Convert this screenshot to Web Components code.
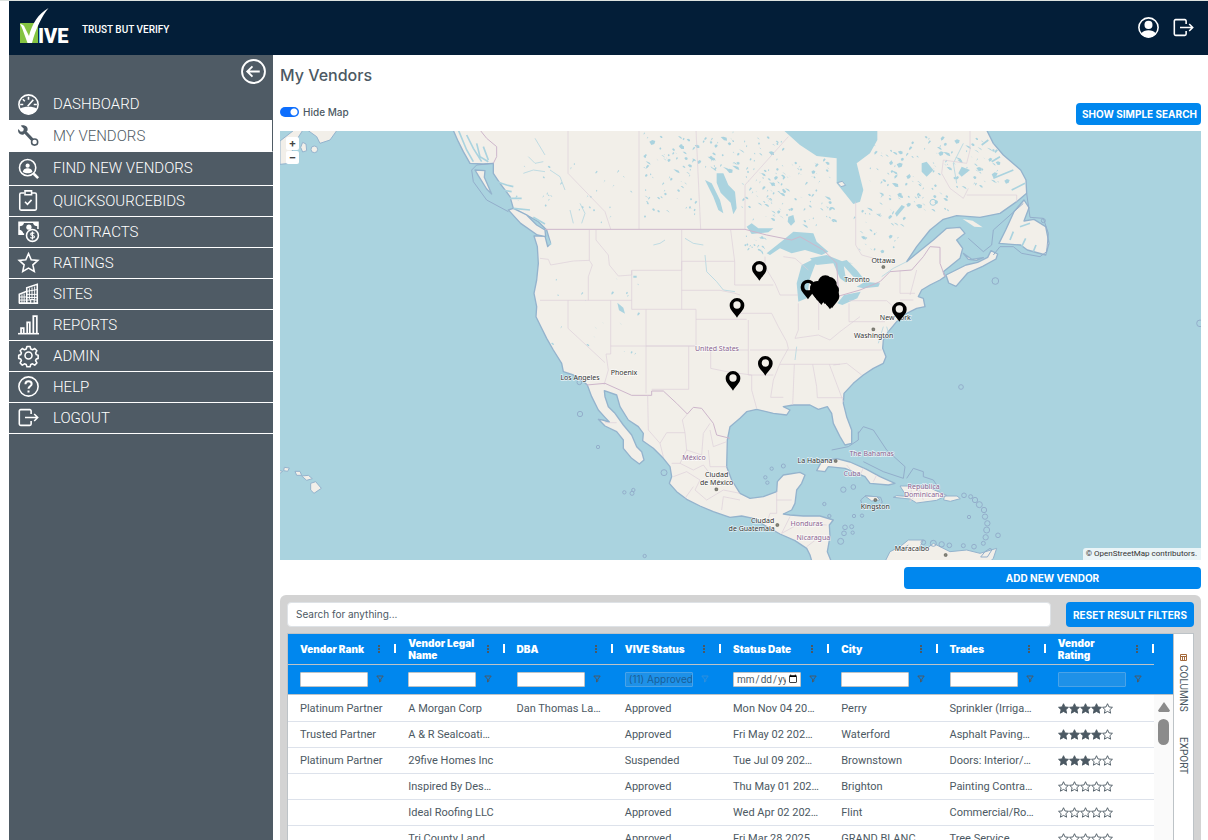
<!DOCTYPE html>
<html lang="en">
<head>
<meta charset="utf-8">
<title>VIVE - My Vendors</title>
<style>
body {
    margin: 0;
    font-family: Inter, Roboto, "Liberation Sans", sans-serif;
    font-size: 11px;
    color: #4c5963;
    background-color: #ffffff;
}
</style>
</head>
<body>
<vive-app></vive-app>

<script>
const define = (name, html, setup) => {
    const template = document.createElement('template');
    template.innerHTML = html;
    customElements.define(name, class extends HTMLElement {
        constructor() {
            super();
            this.attachShadow({ mode: 'open' }).append(template.content.cloneNode(true));
        }

        connectedCallback() {
            if (setup) setup(this, this.shadowRoot);
        }
    });
};

// 24x24 line icons
const icons = {
    user: '<circle cx="12" cy="12" r="11"/><g fill="currentColor" stroke="none"><circle cx="12" cy="9" r="4.6"/><path d="M3.5 19c2-3.400 5-4 8.500-4s6.500.6 8.500 4c-2 2.800-5 4.200-8.500 4.200S5.500 21.800 3.500 19z"/></g>',
    exit: '<path d="M15 8V4.500a1.500 1.500 0 0 0-1.500-1.500H3A1.500 1.500 0 0 0 1.500 4.500v15A1.500 1.500 0 0 0 3 21h10.500a1.500 1.500 0 0 0 1.500-1.500V16M8 12h14.500M18.500 8l4 4-4 4"/>',
    back: '<circle cx="12" cy="12" r="11"/><path d="M18 12H6.500M11 7l-5 5 5 5"/>',
    dashboard: '<circle cx="12" cy="12" r="11"/><path d="M2 17c3-2 6-2.500 10-2.500s7 .5 10 2.500c-2 4-5.500 6-10 6s-8-2-10-6z" fill="currentColor" stroke="none"/><path d="M12 3v3.500M5.500 6l2.300 2.300M2.500 12H6M18 12h3.500M11 14l6.500-7.500"/>',
    wrench: '<path d="M3.200.8l3.500 3.500-.8 2.700-2.700.8L.2 4.500C-.3 7 .4 9 2.200 10.300c1.300.9 2.800 1 4.200.6l4.500-4.500c.4-1.600.1-3.200-1-4.400C8.300.3 5.500-.2 3.200.8z" fill="currentColor" stroke="none"/><path d="M7.500 7.500L16.500 17" stroke-width="3.500"/><circle cx="19" cy="19.500" r="3.500"/>',
    find: '<circle cx="11" cy="11" r="9.300"/><path d="M18 18l5 5" stroke-width="3"/><circle cx="11" cy="8.800" r="2.400" fill="currentColor" stroke="none"/><path d="M5.500 16c.5-3.500 3-4.300 5.500-4.300s5 .8 5.500 4.300c-3 2-8 2-11 0z" fill="currentColor" stroke="none"/>',
    clipboard: '<path d="M7 3.500H3.500A1.500 1.500 0 0 0 2 5v16.500A1.500 1.500 0 0 0 3.500 23h16a1.500 1.500 0 0 0 1.500-1.500V5a1.500 1.500 0 0 0-1.500-1.500H16"/><path d="M8 1h7.500v4.500H8zM8 13.500l2.800 2.800 4.700-5"/>',
    contracts: '<path d="M7 15H1.200V1.500h21.600V9"/><path d="M1 1h6c0 3-2 5-6 5zM23 1h-6c0 3 2 5 6 5zM1 15v-5c3 0 5 2 5 5z" fill="currentColor" stroke="none"/><circle cx="12.500" cy="7" r="3" fill="currentColor" stroke="none"/><circle cx="16.500" cy="16.500" r="6.800" fill="#4f5b65"/><path d="M18.800 14.200c-1-1-4.300-1-4.300.8 0 2 4.300 1 4.300 3 0 1.800-3.500 1.800-4.600.6M16.500 12v9" stroke-width="1.300"/>',
    star: '<path d="M12 1.800l3.100 7 7.600.8-5.700 5.100 1.600 7.500-6.600-3.800-6.600 3.800L7 14.700 1.300 9.600l7.600-.8z"/>',
    sites: '<path d="M1.500 23V13L10 9.500M10 23V5.500L22 1.500V23zM1 23h22"/><path d="M13 6v13M16 5v13M19 4v15M10 9.500l12-2M10 13h12M10 16.500h12M10 19.500h12M4.500 13v10M7 12v11M1.500 16H10M1.500 19.500H10" stroke-width="1.100"/><rect x="14.500" y="19" width="4" height="4" fill="#4f5b65" stroke-width="1.300"/>',
    reports: '<path d="M0 22.500h24"/><path d="M3.500 22v-6h3v6M10.500 22V9.500h3V22M17.500 22V2.500h4V22" stroke-width="2"/>',
    gear: '<circle cx="12" cy="12" r="4"/><path d="M10.200 1.800h3.600l.8 2.800 2 .9 2.500-1.500 2.500 2.500-1.500 2.600.8 1.900 2.100.7v3.600l-2.100.7-.8 1.900 1.500 2.600-2.500 2.500-2.500-1.500-2 .8-.8 2.600h-3.600l-.8-2.600-2-.8-2.500 1.500-2.500-2.500 1.500-2.600-.8-1.900-2.300-.7v-3.600l2.300-.7.8-1.900-1.500-2.600 2.500-2.500 2.500 1.500 2-.9z" stroke-linejoin="round"/>',
    help: '<circle cx="12" cy="12" r="11"/><path d="M8.500 9.500c0-2.300 1.500-3.500 3.600-3.500s3.500 1.300 3.500 3.100c0 2.500-3.600 2.600-3.600 5.400M12 16.500v2.300" stroke-width="2.300"/>'
};

define('vive-icon', `
<style>
:host { display: block; width: 21px; height: 21px; flex: none; }
svg { display: block; width: 100%; height: 100%; overflow: visible; }
</style>
<svg viewBox="0 0 24 24" fill="none" stroke="currentColor" stroke-width="1.8"></svg>
`, (el, root) => {
    root.querySelector('svg').innerHTML = icons[el.getAttribute('name')];
});

define('vive-button', `
<style>
:host { display: block; }
button {
    display: block;
    width: 100%;
    height: 100%;
    padding: 0 6px;
    border: none;
    border-radius: 4px;
    background-color: #0087ee;
    color: #ffffff;
    font: 700 10px Inter, sans-serif;
    white-space: nowrap;
}
</style>
<button type="button"><slot></slot></button>
`);

define('vive-header', `
<style>
:host {
    display: flex;
    align-items: center;
    height: 54px;
    box-sizing: border-box;
    padding: 0 14px 2px 9px;
    background-color: #031e38;
    color: #ffffff;
}
.logo { width: 58px; height: 44px; margin-right: 6px; overflow: visible; }
.logo text { font: 900 20px Roboto, sans-serif; }
.tagline { flex: 1; padding-top: 4px; font: 500 10px Roboto, sans-serif; }
a { color: inherit; margin-left: 14px; }
</style>
<svg class="logo" viewBox="0 0 58 44" role="img" aria-label="VIVE">
    <path d="M2 18h18v20H2z" fill="#84c341"/>
    <path d="M2 19c2 0 4 1 5 4l4 8C14 19 20 9 30.500 3 24 11 18 23 14 38h-4.500L5.500 27C4.500 24 3.500 21 2 19z" fill="#ffffff"/>
    <text x="20" y="38" fill="#ffffff">IVE</text>
</svg>
<span class="tagline">TRUST BUT VERIFY</span>
<a href="#profile" aria-label="Profile"><vive-icon name="user"></vive-icon></a>
<a href="#logout" aria-label="Log out"><vive-icon name="exit"></vive-icon></a>
`);

define('nav-item', `
<style>
:host { display: block; height: 31px; border-bottom: 1px solid #ffffff; box-sizing: border-box; }
:host([plain]) { border-color: transparent; }
:host([tall]) { height: 34px; }
:host([active]) { height: 32px; background-color: #ffffff; border-right: 1px solid #4f5b65; }
:host([active]) a { color: #4f5b65; }
a {
    display: flex;
    align-items: center;
    gap: 14px;
    height: 100%;
    box-sizing: border-box;
    padding: 0 0 1px 9px;
    color: #ffffff;
    font: 300 15px Roboto, sans-serif;
    text-decoration: none;
}
:host([plain]) a, :host([active]) a { padding-bottom: 0; }
</style>
<a href="#"><slot></slot></a>
`, (el, root) => {
    root.querySelector('slot').insertAdjacentHTML('beforebegin', `<vive-icon name="${el.getAttribute('icon')}"></vive-icon>`);
});

define('vive-sidebar', `
<style>
:host { display: block; width: 264px; flex: none; background-color: #4f5b65; color: #ffffff; }
button {
    display: block;
    margin: 4px 7px 5px auto;
    padding: 0;
    border: none;
    background: none;
    color: inherit;
}
button vive-icon { width: 25px; height: 25px; }
</style>
<button type="button" aria-label="Collapse menu"><vive-icon name="back"></vive-icon></button>
<nav>
    <nav-item icon="dashboard" plain>DASHBOARD</nav-item>
    <nav-item icon="wrench" active>MY VENDORS</nav-item>
    <nav-item icon="find" tall>FIND NEW VENDORS</nav-item>
    <nav-item icon="clipboard">QUICKSOURCEBIDS</nav-item>
    <nav-item icon="contracts">CONTRACTS</nav-item>
    <nav-item icon="star">RATINGS</nav-item>
    <nav-item icon="sites">SITES</nav-item>
    <nav-item icon="reports">REPORTS</nav-item>
    <nav-item icon="gear">ADMIN</nav-item>
    <nav-item icon="help">HELP</nav-item>
    <nav-item icon="exit">LOGOUT</nav-item>
</nav>
`);

define('vendor-map', `
<style>
:host { display: block; position: relative; height: 429px; overflow: hidden; background-color: #aad3df; }
svg { display: block; width: 100%; height: 100%; }
.land { fill: #f2efe9; stroke: #94b3cd; stroke-width: 4; stroke-linejoin: round; }
.isle { fill: #f2efe9; stroke: #94b3cd; stroke-width: 3; }
.water { fill: #aad3df; }
.sea-line { fill: none; stroke: #93aecb; stroke-width: 3; }
.states { fill: none; stroke: #ddcfd9; stroke-width: 2; }
.border { fill: none; stroke: #cdb6cb; stroke-width: 3; }
.inlets { fill: none; stroke: #aad3df; stroke-width: 5; }
text { font: 21px "Noto Sans", sans-serif; fill: #333333; text-anchor: middle; paint-order: stroke; stroke: #ffffff; stroke-opacity: 0.7; stroke-width: 4; }
.country text { fill: #8a6490; }
.zoom { position: absolute; left: 6px; top: 6px; display: flex; flex-direction: column; gap: 1px; }
.zoom button {
    width: 13px;
    height: 13px;
    padding: 0;
    border: none;
    border-radius: 2px;
    background-color: #ffffff;
    color: #444444;
    font: 700 11px/13px Inter, sans-serif;
}
.credit {
    position: absolute;
    right: 0;
    bottom: 0;
    padding: 0 4px 0 3px;
    background-color: rgba(255, 255, 255, 0.75);
    border-radius: 3px 0 0 0;
    font: 8px/12px Roboto, sans-serif;
    color: #333333;
}
.credit a { color: inherit; text-decoration: none; }
</style>
<svg viewBox="0 3 2763 1287" preserveAspectRatio="xMidYMid slice" role="img" aria-label="Map of vendors">
    <path class="land" d="M515-10L535 35 550 65 570 100 610 102 640 100 640 130 660 160 690 200 700 235 740 255 775 275 800 300 812 340 803 350 795 318 762 318 772 350 775 400 770 450 762 490 770 530 768 560 785 595 800 625 820 660 845 700 850 725 880 735 905 750 922 765 935 800 955 840 975 862 988 876 968 870 955 868 975 888 1010 905 1030 930 1030 955 1055 985 1078 1002 1092 990 1085 965 1070 950 1055 915 1030 885 1005 850 985 830 975 800 973 782 1010 795 1020 830 1045 870 1075 890 1090 910 1088 932 1120 955 1150 985 1170 1010 1175 1040 1168 1060 1190 1085 1220 1108 1260 1128 1300 1145 1350 1162 1385 1158 1420 1165 1460 1190 1500 1212 1545 1232 1580 1255 1590 1275 1600 1310 1660 1310 1642 1265 1650 1220 1648 1185 1660 1170 1620 1158 1570 1158 1530 1155 1510 1152 1535 1140 1545 1120 1550 1080 1565 1060 1575 1035 1560 1027 1510 1035 1492 1055 1490 1085 1450 1100 1410 1105 1380 1090 1355 1050 1340 1010 1342 930 1350 890 1380 865 1400 845 1430 838 1480 850 1520 855 1530 840 1510 830 1540 825 1590 825 1615 838 1642 830 1655 850 1660 880 1680 920 1695 945 1715 940 1715 900 1700 860 1690 820 1692 790 1720 760 1750 735 1780 715 1810 700 1818 680 1808 655 1810 630 1825 605 1850 575 1870 555 1910 535 1935 530 1930 505 1915 500 1925 480 1950 465 1980 450 1995 440 1990 425 2015 405 2040 385 2048 355 2030 330 2055 310 2040 292 2000 295 1960 330 1920 362 1880 395 1910 350 1950 300 1990 268 2030 257 2100 262 2160 250 2210 215 2240 190 2238 150 2222 120 2170 75 2140 40 2115-10z"/>
    <path class="water" d="M1510 0l50 45 50 33 60 7v75l50 62 20-7 10-35-20-80 40-30 22-40v-35z"/>
    <path class="isle" d="M1672 158l15-4 10 12-14 4z" stroke="none"/>
    <path class="isle" d="M0 103l0-70 45-35h25L40 45 30 100zM75-5h100L150 30 120 40 110 20zM93 58a10 10 0 1 0 20 0a10 10 0 1 0-20 0M62 52l6-15 10 5 2 20-12 4z"/>
    <path class="land" d="M585 120l30 2-2 20 22 50-15-15-25-40zM685 240l15-5 40 20 30 30 25 15 2 20-25-5-50-35z"/>
    <path class="sea-line" d="M640 100L590 105 575 120 580 155 620 210 685 245"/>
    <path class="land" d="M2232 210l-30 35-25 55-20 40 65 5 20 15 55 15 10-35-10-50-35-22-30 5 15-40z"/>
    <path class="land" d="M1998 435l30-15 30-15 35-8 30-15 10-20 20 10-5 15-40 22-45 20-35 40-22-10zM2050 370l25 18 35-5-20 8-25-3z"/>
    <path class="isle" style="stroke:none" d="M2048 267l30 5 30 20-25-2z"/>
    <path class="sea-line" d="M2240 190L2250 262 2290 265 2305 310 2300 365 2280 380 2225 370 2200 350 2160 350 2140 375M2230 220l-90 80-5 45-25 20-45-40"/>
    <path class="sea-line" d="M1735 910l15-20 30 10 40 60 55 50-5 35-60-20-60-30M1655 960l50-10 30-20V905M1880 1045l20-30 30 10v15l30 10 20 30M1742 1110l15-13 45 5 5 15-20 12-40-3z"/>
    <!-- Caribbean -->
    <path class="land" d="M1610 1022l15-28 45-8 40 10 50 22 40 22 45 20-20 5-55-5-15-20-60-25-50-5-10 15z"/>
    <path class="isle" d="M1860 1068l40 0 55 8 45 20-30 15-60 8-20-12-50-5 10-5 30 2zM1993 1098l38 0 10 8-30 8-20-4zM1755 1098l35 2 10 10-25 3zM92 1060l15-5 17 20-22 15-10-10zM45 1024l15 0 5 12-15 0zM65 1038l20-2 12 10-17 5zM13 1012l15 2-5 10-12-2zM0 1022l8 2-8 6"/>
    <path class="isle" d="M1815 1295l15-30 30-15 25-20 45 0-10 20 15 10 25-20 50 25 50-5 40 10 50-15-10 30-20 20zM1865 1260l20-15"/>
    <g class="sea-line">
        <circle cx="2052" cy="1096" r="7"/><circle cx="2072" cy="1100" r="6"/><circle cx="2085" cy="1110" r="8"/><circle cx="2098" cy="1124" r="9"/><circle cx="2112" cy="1140" r="8"/><circle cx="2115" cy="1160" r="8"/><circle cx="2122" cy="1180" r="8"/><circle cx="2120" cy="1200" r="9"/><circle cx="2117" cy="1222" r="8"/><circle cx="2110" cy="1240" r="6"/>
        <circle cx="2154" cy="1216" r="7"/><circle cx="2067" cy="1161" r="5"/><circle cx="1690" cy="1079" r="8"/><circle cx="1720" cy="1071" r="7"/><circle cx="1633" cy="1122" r="5"/><circle cx="1648" cy="1158" r="5"/><circle cx="1722" cy="1158" r="5"/><circle cx="1746" cy="1157" r="5"/><circle cx="1695" cy="1192" r="7"/><circle cx="1715" cy="1190" r="6"/><circle cx="1692" cy="1210" r="7"/><circle cx="1718" cy="1208" r="5"/><circle cx="1682" cy="1234" r="9"/>
        <circle cx="1475" cy="1016" r="5"/><circle cx="1510" cy="1008" r="6"/><circle cx="1456" cy="1042" r="5"/><circle cx="1462" cy="1058" r="5"/><circle cx="1033" cy="1087" r="5"/><circle cx="1060" cy="1080" r="5"/><circle cx="1056" cy="1090" r="6"/><circle cx="954" cy="951" r="5"/><circle cx="1094" cy="1278" r="5"/><circle cx="900" cy="852" r="8"/><circle cx="898" cy="757" r="7"/><circle cx="2043" cy="771" r="7"/><circle cx="2146" cy="453" r="10"/><circle cx="2290" cy="272" r="6"/><circle cx="2760" cy="580" r="10"/>
        <circle cx="1152" cy="1028" r="9"/><circle cx="1930" cy="1237" r="7"/><circle cx="1960" cy="1240" r="9"/><circle cx="1985" cy="1243" r="8"/><circle cx="2008" cy="1246" r="7"/><circle cx="2050" cy="1247" r="6"/><circle cx="2082" cy="1250" r="7"/><path d="M2115 1265l15-10 6 4-14 22h-20z"/>
    </g>
    <!-- fjords and rivers -->
    <path class="inlets" d="M535 0l25 60 20 35M560 15l20 40 25 40M590 40l10 40 25 15M610 50l15 40M650 155l30 10 20 5M665 180l30 5M685 205l40 0M700 235l50 5M760 262l35 20M800 320l12 25M2190 330l10-25M2225 350l12-25M2260 365l8-20M2220 290l30-10M2125 30l-20 15M2160 80l-25 15M2200 120l-60 25M2235 160l-40 20"/>
    <path class="inlets" style="stroke-width:3;opacity:.7" d="M765 25l30 50M745 80l20 20 25-5M810 120l30 20 15 40M730 130l30-10 35 5M900 220l15 30-10 30M870 240l10 40M1275 375l5 50 30 30 20 25 35 5M1215 325l25 15 30 5M1120 345l20-5 15-10M1880 395l-40 20-35 25M2050 40l-30 60 10 60M1550 650l-5 40M1810 590l-15 50M1820 590l10 35"/>
    <g class="water" id="lakes">
        <path d="M1310 130l20 0 15 35 20 20 5 50-10 18-8-35-30-30-12-30zM1275 150l20 10 25 50 10 40-15-10-15-40z"/>
        <path d="M1460 370l50-40 30-25 60 5 10 25 35 30-20 10-50-15-40 10-35-15-30 20z"/>
        <path d="M1555 515l-5-55 15-55 30-15 30-5-20 20-15 40-10 60zM1590 385l50-10 50 20 30 5-30 0 10 60-20-15-20-45-50 5zM1680 395l20-5 30 30 20 25-30-5z"/>
        <path d="M1672 520l20-25 50-10-10 20-45 20zM1730 470l25-15 45 5-5 10-45 5z"/>
        <path d="M1012 518l18 15 5 18-18-10zM1525 260l15-5 5 20-12 12-10-12zM1400 290l15-10 20 15 45 0-15 12-50 5zM1925 100l15-5 20 25-20 20-15-15zM2035 130l10-20 25 10-25 20zM1865 225l10 5-25 30-5-10zM1060 437h10v6h-10z"/>
    </g>
    <path class="sea-line" style="stroke:#aad3df" d="M1950 217a9 9 0 1 0 18 0a9 9 0 1 0-18 0"/>
    <!-- state and province lines -->
    <path class="states" d="M864 0V130L975 245 992 297M1077 0V297M1248 0L1262 297M1525 20L1395 165V297M1727 215V345L1745 375 1800 390M780 385L805 388 812 405 880 393 928 391V300M928 391L937 405 925 440V511M948 300V330L985 375 988 405 1015 438 1055 435V421H1205V300M1055 421V538H1248V648H992V511M780 511H1055M864 511V595L975 698M1205 394H1364L1352 300M1205 394V538M1205 481H1320L1365 490 1380 495M1364 394V465M1248 568H1400M1098 538V790M992 648V672H978L985 720 972 765M1098 648H1248V660H1405M1226 648V778H1115M1292 660V715L1340 725 1415 735V780L1430 835M1364 465H1480M1380 550H1475L1495 590 1520 635 1525 655 1500 700 1480 750 1472 802H1510M1455 380V410L1485 460 1500 495H1555M1405 570V735H1480M1410 660H1805M1500 703H1680M1555 520V600L1545 625 1615 615 1650 630 1680 605 1740 560M1616 510V600M1707 520V575H1815M1707 512H1820L1840 530M1543 703L1538 825M1598 703L1610 770 1612 803H1690M1648 703L1690 815M1660 705L1700 700 1745 735M1860 422V490H1905M1860 510H1900M1910 420L1890 495M1510 380L1545 385 1585 420M2060 195H2210V215M2070 0V60L2060 100 1990 90 1985 130 2010 175 2050 205 2065 175"/>
    <path class="border" d="M600 0L620 25 650 50V80L640 100M795 298H1395L1460 315 1535 330 1560 320 1630 360 1670 400 1675 480M1670 500L1740 480 1800 455 1830 425 1895 420 1930 380 1950 350 1980 352V400L1995 440M920 765L975 760 1055 796H1115V783H1150L1190 820 1222 852 1240 832 1265 835 1300 880 1310 915 1350 925"/>
    <path class="states" d="M975 878H1010M1103 796L1105 900 1140 940 1160 908H1215L1207 870 1222 852M1140 940L1150 980M1215 908L1220 960 1200 1000 1175 1000M1220 960L1265 975 1270 910 1290 880M1290 900L1300 950 1340 935M1285 960L1290 1010H1340M1200 1000L1240 1020 1270 1005 1300 1045M1180 1040L1220 1025 1260 1050 1245 1080 1280 1110 1330 1080 1380 1090M1215 1105L1240 1070M1325 1140L1330 1100 1380 1110M1490 1085V1150H1470L1460 1180M1490 1110H1535M1530 1160L1505 1210 1560 1180 1640 1185M1580 1250L1620 1220 1650 1225M1895 1070L1890 1115 1920 1080 1930 1110M1700 1005L1720 1030M1750 1015L1740 1035M1790 1035L1780 1055"/>
    <g>
        <text x="900" y="750">Los Angeles</text>
        <text x="1032" y="735">Phoenix</text>
        <text x="1810" y="399">Ottawa</text>
        <text x="1731" y="456">Toronto</text>
        <text x="1846" y="570">New York</text>
        <text x="1781" y="625">Washington</text>
        <text x="1310" y="1041">Ciudad</text>
        <text x="1310" y="1066">de México</text>
        <text x="1605" y="1000">La Habana</text>
        <text x="1786" y="1137">Kingston</text>
        <text x="1448" y="1179">Ciudad</text>
        <text x="1415" y="1204">de Guatemala</text>
        <text x="1896" y="1263">Maracaibo</text>
    </g>
    <g class="country">
        <text x="1311" y="662">United States</text>
        <text x="1242" y="991">México</text>
        <text x="1775" y="978">The Bahamas</text>
        <text x="1716" y="1037">Cuba</text>
        <text x="1931" y="1077">República</text>
        <text x="1931" y="1102">Dominicana</text>
        <text x="1580" y="1188">Honduras</text>
        <text x="1600" y="1230">Nicaragua</text>
    </g>
    <g id="towns" fill="#8b8b80" stroke="#55554d" stroke-width="2"></g>
    <g id="pins"></g>
</svg>
<div class="zoom">
    <button type="button" aria-label="Zoom in">+</button>
    <button type="button" aria-label="Zoom out">−</button>
</div>
<div class="credit">© <a href="#osm">OpenStreetMap</a> contributors.</div>
`, (el, root) => {
    const pins = [[1438, 452], [1371, 563], [1359, 782], [1456, 737], [1858, 575], [1584, 508]];
    // the Michigan cluster
    const cluster = [[1612, 512], [1620, 520], [1624, 525], [1628, 515], [1636, 495], [1640, 505],
        [1634, 522], [1642, 528], [1650, 538], [1645, 515], [1652, 525], [1656, 535], [1655, 518], [1648, 500]];
    root.querySelector('#pins').innerHTML = pins.map(([x, y]) =>
        `<path d="M${x} ${y}c-8-14-22-22-22-37a22 22 0 0 1 44 0c0 15-14 23-22 37zm0-49a11 11 0 1 0 0 22a11 11 0 1 0 0-22z" fill-rule="evenodd"/>`
    ).join('') + cluster.map(([x, y]) =>
        `<path d="M${x} ${y}c-8-14-22-22-22-37a22 22 0 0 1 44 0c0 15-14 23-22 37z"/>`
    ).join('');
    root.querySelector('#towns').innerHTML = [[1810, 411], [1780, 598], [1786, 1110], [1492, 1185], [1309, 1078], [1997, 1275], [1667, 993]]
        .map(([x, y]) => `<rect x="${x - 4}" y="${y - 4}" width="8" height="8" rx="2"/>`).join('');

    // small lakes scattered over the Canadian shield
    let seed = 7;
    const random = () => (seed = (seed * 16807) % 2147483647) / 2147483647;
    let lakes = '';
    const scatter = (count, x, y, w, h, size) => {
        for (let i = 0; i < count; i++) {
            const cx = Math.round(x + random() * w);
            const cy = Math.round(y + random() * h);
            const r = Math.round(2 + random() * random() * size);
            const turn = Math.round(random() * 8 - 4);
            lakes += `<path d="M${cx} ${cy}l${r} ${turn - 2} ${r} 3 ${turn} ${r} ${-r} ${-turn}z"/>`;
        }
    };
    scatter(70, 1090, 10, 290, 110, 9);
    scatter(35, 1090, 110, 160, 150, 4);
    scatter(70, 1380, 20, 130, 250, 7);
    scatter(60, 1500, 90, 160, 200, 6);
    scatter(90, 1760, 20, 240, 220, 9);
    scatter(50, 2000, 20, 180, 150, 8);
    scatter(30, 1720, 240, 160, 130, 6);
    scatter(20, 800, 440, 280, 240, 3);
    scatter(30, 700, 100, 360, 180, 3);
    scatter(20, 1390, 310, 60, 60, 4);
    root.querySelector('#lakes').insertAdjacentHTML('beforeend', lakes);
});

define('star-rating', `
<style>
:host { display: flex; }
svg { width: 11px; height: 11px; fill: none; stroke: #4c5963; }
svg.full { fill: #4c5963; }
</style>
`, (el, root) => {
    const value = Number(el.getAttribute('value'));
    for (let i = 0; i < 5; i++) {
        root.innerHTML += `<svg class="${i < value ? 'full' : ''}" viewBox="0 0 12 12"><path d="M6 .8l1.600 3.500 3.800.4-2.800 2.600.8 3.800L6 9.200l-3.400 1.900.8-3.800L.6 4.700l3.800-.4z"/></svg>`;
    }
});

const columns = ['Vendor Rank', 'Vendor Legal Name', 'DBA', 'VIVE Status', 'Status Date', 'City', 'Trades', 'Vendor Rating'];
const vendors = [
    ['Platinum Partner', 'A Morgan Corp', 'Dan Thomas La…', 'Approved', 'Mon Nov 04 20…', 'Perry', 'Sprinkler (Irriga…', 4],
    ['Trusted Partner', 'A & R Sealcoati…', '', 'Approved', 'Fri May 02 202…', 'Waterford', 'Asphalt Paving…', 4],
    ['Platinum Partner', '29five Homes Inc', '', 'Suspended', 'Tue Jul 09 202…', 'Brownstown', 'Doors: Interior/…', 3],
    ['', 'Inspired By Des…', '', 'Approved', 'Thu May 01 202…', 'Brighton', 'Painting Contra…', 0],
    ['', 'Ideal Roofing LLC', '', 'Approved', 'Wed Apr 02 202…', 'Flint', 'Commercial/Ro…', 0],
    ['', 'Tri County Land…', '', 'Approved', 'Fri Mar 28 2025…', 'GRAND BLANC', 'Tree Service', 0]
];

define('vendor-table', `
<style>
:host { display: block; min-width: 0; }
table { width: 100%; table-layout: fixed; border-collapse: separate; border-spacing: 0; background-color: #ffffff; }
th, td { box-sizing: border-box; padding: 0 0 0 12px; text-align: left; white-space: nowrap; overflow: hidden; }
thead { background-color: #0087ee; color: #ffffff; }
thead th { height: 31px; padding-bottom: 1px; border-bottom: 1px solid #bdc3c7; font-size: 10px; font-weight: 900; line-height: 12px; white-space: normal; }
thead td { height: 30px; padding-bottom: 1px; border-bottom: 1px solid #bdc3c7; }
thead tr:first-child td.rail { border-bottom-color: #0087ee; }
.rail { width: 19px; padding: 0; }
.head, .filter { display: flex; align-items: center; }
.head span { flex: 1; padding-right: 8px; }
.head .dots { flex: none; width: 2px; height: 8px; margin-right: 14px; background: repeating-linear-gradient(#4c5963 0 2px, transparent 2px 3px); }
.head .grip { flex: none; width: 1px; height: 9px; background-color: #ffffff; border-right: 1px solid #ffffff; }
.filter input {
    width: 68px;
    height: 15px;
    box-sizing: border-box;
    padding: 0 0 0 3px;
    border: 1px solid #bdc3c7;
    border-radius: 1px;
    background-color: #ffffff;
    color: #4c5963;
    font: 10px Inter, sans-serif;
}
.filter input:disabled { background-color: #1e91e8; border-color: #4aa3e8; color: #1a5f98; }
.filter input[type='date'] { padding: 0 0 0 2px; overflow: hidden; font-family: Roboto, sans-serif; }
.filter svg { width: 8px; height: 8px; margin-left: 8px; fill: none; stroke: #4c5963; }
.filter.off svg { stroke: #2e8fdc; }
tbody td { height: 26px; border-bottom: 1px solid #dde2eb; font: 11px Roboto, sans-serif; }
tbody tr:first-child td { height: 27px; }
tbody td.rail { padding: 7px 0 0 4px; border: none; vertical-align: top; background-color: #fafafa; }
.rail svg { display: block; width: 12px; height: 10px; fill: #8b8b8b; }
.thumb { width: 11px; height: 26px; margin-top: 7px; border-radius: 6px; background-color: #8b8b8b; }
</style>
<table>
    <thead></thead>
    <tbody></tbody>
</table>
`, (el, root) => {
    const funnel = '<svg viewBox="0 0 8 8"><path d="M.8 1h6.400L4.800 4.200v2L3.500 7V4.200z"/></svg>';
    const filterInput = name => {
        if (name === 'VIVE Status') return `<input type="text" value="(11) Approved" disabled aria-label="${name} filter">`;
        if (name === 'Vendor Rating') return `<input type="text" disabled aria-label="${name} filter">`;
        return `<input type="${name === 'Status Date' ? 'date' : 'text'}" aria-label="${name} filter">`;
    };
    root.querySelector('thead').innerHTML =
        '<tr>' + columns.map(name => `<th scope="col"><div class="head"><span>${name}</span><i class="dots"></i><i class="grip"></i></div></th>`).join('') + '<td class="rail"></td></tr>' +
        '<tr>' + columns.map(name => `<td><div class="filter ${name === 'VIVE Status' ? 'off' : ''}">${filterInput(name)}${funnel}</div></td>`).join('') + '<td class="rail"></td></tr>';
    root.querySelector('tbody').innerHTML = vendors.map((vendor, i) =>
        '<tr>' + vendor.map((value, col) => `<td>${col === 7 ? `<star-rating value="${value}"></star-rating>` : value.replace('&', '&amp;')}</td>`).join('') +
        (i === 0 ? `<td class="rail" rowspan="${vendors.length}"><svg viewBox="0 0 12 10"><path d="M6 0l6 8.500-1 1.500H1L0 8.500z"/></svg><div class="thumb"></div></td>` : '') + '</tr>'
    ).join('');
});

define('vendor-grid', `
<style>
:host {
    display: block;
    padding: 7px 7px 0;
    border-radius: 6px 6px 0 0;
    background-color: #d3d3d3;
}
.search { display: flex; gap: 15px; margin-bottom: 6px; }
.search input {
    flex: 1;
    height: 25px;
    box-sizing: border-box;
    padding: 0 8px 2px;
    border: 1px solid #dee2e6;
    border-radius: 4px;
    font: 10px Inter, sans-serif;
}
.search input::placeholder { color: #4c5963; }
.search vive-button { width: 128px; height: 25px; }
.grid { display: flex; border: 1px solid #bdc3c7; border-bottom: none; }
vendor-table { flex: 1; }
.tools {
    display: flex;
    flex-direction: column;
    width: 20px;
    box-sizing: border-box;
    padding-top: 20px;
    gap: 25px;
    border-left: 1px solid #bdc3c7;
    background-color: #ffffff;
}
.tools button {
    display: flex;
    align-items: center;
    gap: 4px;
    padding: 0;
    border: none;
    background: none;
    color: #4c5963;
    font: 10px/19px Roboto, sans-serif;
    writing-mode: vertical-rl;
}
.tools svg { width: 7px; height: 7px; fill: none; stroke: #a56a3c; }
</style>
<div class="search">
    <input type="text" placeholder="Search for anything..." aria-label="Search for anything">
    <vive-button>RESET RESULT FILTERS</vive-button>
</div>
<div class="grid">
    <vendor-table></vendor-table>
    <div class="tools">
        <button type="button"><svg viewBox="0 0 7 7"><path d="M.5.500h6v6h-6zM.5 2.500h6M2.500 2.500v4M4.500 2.500v4"/></svg>COLUMNS</button>
        <button type="button">EXPORT</button>
    </div>
</div>
`);

define('map-toggle', `
<style>
:host { display: block; }
label { display: flex; align-items: center; gap: 4px; font-size: 10px; font-weight: 500; }
input {
    appearance: none;
    width: 19px;
    height: 10px;
    margin: 0;
    border-radius: 5px;
    background: radial-gradient(circle at 14px 5px, #ffffff 3px, #0d6efd 4px);
}
</style>
<label><input type="checkbox" role="switch" checked><slot></slot></label>
`);

define('vive-app', `
<style>
:host {
    display: flex;
    flex-direction: column;
    height: 100vh;
    box-sizing: border-box;
    padding-left: 9px;
    border-top: 1px solid #dde3df;
    overflow: hidden;
}
vive-header { flex: none; }
.body { display: flex; flex: 1; min-height: 0; }
main { flex: 1; min-width: 0; padding: 9px 7px 0; }
h1 { margin: 0; font-size: 16px; line-height: 22px; font-weight: 500; }
.toolbar { display: flex; align-items: flex-start; justify-content: space-between; margin: 17px 0 6px; }
.toolbar map-toggle { padding-top: 3px; }
.toolbar vive-button { width: 125px; height: 22px; }
.add { width: 297px; height: 22px; margin: 7px 0 6px auto; }
</style>
<vive-header></vive-header>
<div class="body">
    <vive-sidebar></vive-sidebar>
    <main>
        <h1>My Vendors</h1>
        <div class="toolbar">
            <map-toggle>Hide Map</map-toggle>
            <vive-button>SHOW SIMPLE SEARCH</vive-button>
        </div>
        <vendor-map></vendor-map>
        <vive-button class="add">ADD NEW VENDOR</vive-button>
        <vendor-grid></vendor-grid>
    </main>
</div>
`);
</script>
</body>
</html>
